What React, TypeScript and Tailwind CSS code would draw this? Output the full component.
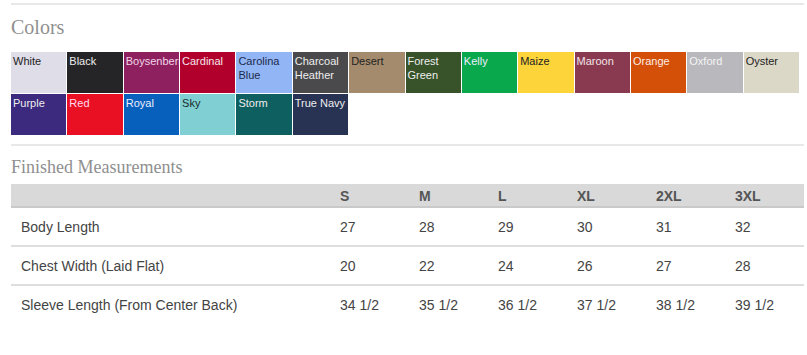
const swatches: { name: string; bg: string; fg: string }[] = [
  { name: "White", bg: "bg-[#dedde8]", fg: "text-[#222]" },
  { name: "Black", bg: "bg-[#252426]", fg: "text-[#eee]" },
  { name: "Boysenberry", bg: "bg-[#8e2060]", fg: "text-[#f2d6e6]" },
  { name: "Cardinal", bg: "bg-[#b2002d]", fg: "text-[#f5e6ea]" },
  { name: "Carolina Blue", bg: "bg-[#91b5f5]", fg: "text-[#1c2a4a]" },
  { name: "Charcoal Heather", bg: "bg-[#4a4a4c]", fg: "text-[#eee]" },
  { name: "Desert", bg: "bg-[#a58b6d]", fg: "text-[#222]" },
  { name: "Forest Green", bg: "bg-[#38532a]", fg: "text-[#eee]" },
  { name: "Kelly", bg: "bg-[#0aa84d]", fg: "text-[#eef]" },
  { name: "Maize", bg: "bg-[#fdd43a]", fg: "text-[#222]" },
  { name: "Maroon", bg: "bg-[#8a3a50]", fg: "text-[#f2e4e8]" },
  { name: "Orange", bg: "bg-[#d44f08]", fg: "text-[#fbeee6]" },
  { name: "Oxford", bg: "bg-[#b9b9bd]", fg: "text-[#f4f4f4]" },
  { name: "Oyster", bg: "bg-[#dcd8c8]", fg: "text-[#222]" },
  { name: "Purple", bg: "bg-[#3b2a7e]", fg: "text-[#eee]" },
  { name: "Red", bg: "bg-[#ea1023]", fg: "text-[#fde]" },
  { name: "Royal", bg: "bg-[#0760bc]", fg: "text-[#eef]" },
  { name: "Sky", bg: "bg-[#80d0d3]", fg: "text-[#1a2a2a]" },
  { name: "Storm", bg: "bg-[#0e5f5f]", fg: "text-[#eee]" },
  { name: "True Navy", bg: "bg-[#283252]", fg: "text-[#eee]" },
];

const sizes = ["S", "M", "L", "XL", "2XL", "3XL"];

const rows: { label: string; values: string[] }[] = [
  { label: "Body Length", values: ["27", "28", "29", "30", "31", "32"] },
  { label: "Chest Width (Laid Flat)", values: ["20", "22", "24", "26", "27", "28"] },
  {
    label: "Sleeve Length (From Center Back)",
    values: ["34 1/2", "35 1/2", "36 1/2", "37 1/2", "38 1/2", "39 1/2"],
  },
];

export default function App() {
  return (
    <div className="h-[355px] w-[807px] overflow-hidden bg-white pl-[11px] pt-[3px] font-['Liberation_Sans',Arial,sans-serif]">
      <div className="w-[793px] border-t-2 border-[#e8e8e8]" />
      <h2 className="mt-[10px] font-['Liberation_Serif',serif] text-[20px] leading-[24px] text-[#8f8f8f]">
        Colors
      </h2>
      <div className="mt-[13px] grid w-[788px] grid-cols-[repeat(14,1fr)] grid-rows-[41px_41px] gap-px">
        {swatches.map((s) => (
          <div
            key={s.name}
            className={`${s.bg} ${s.fg} overflow-hidden px-[2px] pt-[2px] text-[11px] leading-[14px]`}
          >
            {s.name.includes(" ") ? s.name : <span className="whitespace-nowrap">{s.name}</span>}
          </div>
        ))}
      </div>
      <div className="mt-[9px] w-[793px] border-t-2 border-[#e8e8e8]" />
      <h2 className="mt-[10px] font-['Liberation_Serif',serif] text-[18px] leading-[22px] text-[#8f8f8f]">
        Finished Measurements
      </h2>
      <table className="mt-[6px] w-[793px] table-fixed border-collapse text-[14px]">
        <colgroup>
          <col className="w-[319px]" />
          {sizes.map((s) => (
            <col key={s} className="w-[79px]" />
          ))}
        </colgroup>
        <thead>
          <tr className="h-[23px] border-b-2 border-[#c9c9c9] bg-[#d9d9d9]">
            <th />
            {sizes.map((s) => (
              <th key={s} className="pl-[10px] pt-[1px] text-left font-bold leading-[16px] text-[#555]">
                {s}
              </th>
            ))}
          </tr>
        </thead>
        <tbody>
          {rows.map((r, i) => (
            <tr
              key={r.label}
              className={`h-[39px] ${i < rows.length - 1 ? "border-b-2 border-[#dedede]" : ""}`}
            >
              <td className="pl-[10px] leading-[16px] text-[#444]">{r.label}</td>
              {r.values.map((v, j) => (
                <td key={j} className="pl-[10px] leading-[16px] text-[#444]">
                  {v}
                </td>
              ))}
            </tr>
          ))}
        </tbody>
      </table>
    </div>
  );
}
